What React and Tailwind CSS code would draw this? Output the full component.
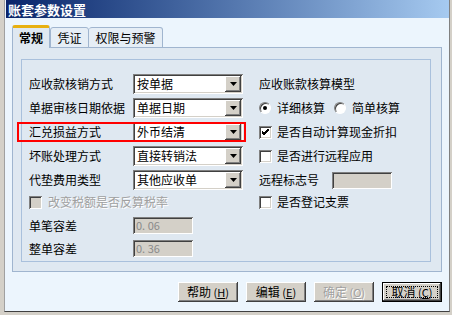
const font = { fontFamily: '"Noto Sans CJK SC", "DejaVu Sans", sans-serif' };

function Combo({ value }) {
  return (
    <div className="relative flex h-[20px] w-[110px] items-center bg-white pl-[4px] shadow-[inset_1px_1px_0_#808080,inset_-1px_-1px_0_#ffffff,inset_2px_2px_0_#404040,inset_-2px_-2px_0_#d4d0c8]">
      <span className="flex-1 text-[12px] leading-none text-black">{value}</span>
      <div className="mr-[2px] flex h-[16px] w-[16px] items-center justify-center bg-[#d4d0c8] shadow-[inset_-1px_-1px_0_#404040,inset_1px_1px_0_#ffffff,inset_-2px_-2px_0_#808080]">
        <svg width="7" height="4" viewBox="0 0 7 4">
          <polygon points="0,0 7,0 3.5,4" fill="#000" />
        </svg>
      </div>
    </div>
  );
}

function Field({ value, w = "w-[60px]" }) {
  return (
    <div className={`flex h-[17px] ${w} items-center bg-[#d4d0c8] pl-[3px] shadow-[inset_1px_1px_0_#808080,inset_-1px_-1px_0_#ffffff,inset_2px_2px_0_#404040,inset_-2px_-2px_0_#d4d0c8]`}>
      <span className="text-[11px] leading-none text-[#8a8a8a]">{value}</span>
    </div>
  );
}

function Check({ checked, disabled }) {
  return (
    <div className={`flex h-[13px] w-[13px] items-center justify-center ${disabled ? "bg-[#d4d0c8]" : "bg-white"} shadow-[inset_1px_1px_0_#808080,inset_-1px_-1px_0_#ffffff,inset_2px_2px_0_#404040,inset_-2px_-2px_0_#d4d0c8]`}>
      {checked && (
        <svg width="7" height="7" viewBox="0 0 7 7">
          <path d="M0 3 L2 5 L7 0 M0 4 L2 6 L7 1 M0 2 L2 4 L7 -1" stroke="#000" strokeWidth="1" fill="none" />
        </svg>
      )}
    </div>
  );
}

function Radio({ checked }) {
  return (
    <div className="flex h-[12px] w-[12px] items-center justify-center rounded-full border border-t-[#808080] border-l-[#808080] border-b-white border-r-white bg-white shadow-[inset_1px_1px_0_#404040]">
      {checked && <div className="h-[4px] w-[4px] rounded-full bg-black" />}
    </div>
  );
}

function Btn({ label, k, disabled, isDefault }) {
  const text = (
    <span className={`text-[12px] leading-none ${disabled ? "text-[#a0a0a0] [text-shadow:1px_1px_0_#ffffff]" : "text-black"}`}>
      {label}
      <span className="text-[11px]"> (<span className="underline">{k}</span>)</span>
    </span>
  );
  if (isDefault) {
    return (
      <div className="h-[20px] w-[60px] border border-black">
        <div className="flex h-full w-full items-center justify-center bg-[#d4d0c8] p-[3px] shadow-[inset_-1px_-1px_0_#404040,inset_1px_1px_0_#ffffff,inset_-2px_-2px_0_#808080]">
          <div className="flex h-full w-full items-center justify-center border border-dotted border-black">{text}</div>
        </div>
      </div>
    );
  }
  return (
    <div className="flex h-[20px] w-[60px] items-center justify-center bg-[#d4d0c8] shadow-[inset_-1px_-1px_0_#404040,inset_1px_1px_0_#ffffff,inset_-2px_-2px_0_#808080]">
      {text}
    </div>
  );
}

export default function App() {
  const rows = [
    ["应收款核销方式", "按单据"],
    ["单据审核日期依据", "单据日期"],
    ["汇兑损益方式", "外币结清"],
    ["坏账处理方式", "直接转销法"],
    ["代垫费用类型", "其他应收单"],
  ];

  const right = [
    <span className="text-[12px] leading-none">应收账款核算模型</span>,
    <div className="flex items-center">
      <Radio checked />
      <span className="ml-[6px] text-[12px] leading-none">详细核算</span>
      <div className="ml-[9px]"><Radio /></div>
      <span className="ml-[6px] text-[12px] leading-none">简单核算</span>
    </div>,
    <div className="flex items-center">
      <Check checked />
      <span className="ml-[5px] text-[12px] leading-none">是否自动计算现金折扣</span>
    </div>,
    <div className="flex items-center">
      <Check />
      <span className="ml-[5px] text-[12px] leading-none">是否进行远程应用</span>
    </div>,
    <div className="flex items-center">
      <span className="w-[73px] text-[12px] leading-none">远程标志号</span>
      <Field value="" />
    </div>,
  ];

  return (
    <div className="h-[315px] w-[452px] overflow-hidden bg-[#d4d0c8] pl-[4px] pr-[2px]" style={font}>
      <div className="flex h-[312px] flex-col border-l border-r border-b border-l-[#a0a0a0] border-r-[#808080] border-b-[#404040] bg-[#ecf5fd]">
        {/* title bar */}
        <div className="ml-[1px] flex h-[18px] items-center bg-gradient-to-r from-[#0a246a] to-[#a6caf0] pl-[2px]">
          <span className="text-[13px] font-bold leading-none text-white">账套参数设置</span>
        </div>

        <div className="pl-[7px] pt-[7px]">
          {/* tabs */}
          <div className="relative z-10 -mb-px flex items-end">
            <div className="flex h-[23px] w-[38px] items-center justify-center rounded-t-[3px] border-x border-t-[3px] border-x-[#a0b5cf] border-t-[#e8b010] bg-[#dfe8f1]">
              <span className="text-[12px] font-bold leading-none">常规</span>
            </div>
            <div className="flex h-[21px] w-[39px] items-center justify-center rounded-t-[3px] border border-[#a0b5cf] bg-[#e6eef6]">
              <span className="text-[12px] leading-none">凭证</span>
            </div>
            <div className="flex h-[21px] w-[74px] items-center justify-center rounded-t-[3px] border border-l-0 border-[#a0b5cf] bg-[#e6eef6]">
              <span className="text-[12px] leading-none">权限与预警</span>
            </div>
          </div>

          {/* panel */}
          <div className="h-[225px] w-[430px] border border-[#a0b5cf] bg-[#dfe8f1] pl-[8px] pt-[11px]">
            <div className="h-[203px] w-[410px] border border-[#a9c0dc] pl-[7px] pt-[14px]">
              {rows.map(([label, value], i) => (
                <div key={label} className={`flex h-[20px] items-center ${i > 0 ? "mt-[4px]" : ""}`}>
                  <div className="relative flex w-[230px] items-center">
                    <span className="w-[104px] text-[12px] leading-none text-black">{label}</span>
                    <Combo value={value} />
                    {i === 2 && (
                      <div className="absolute left-[-12px] top-0 h-[20px] w-[229px] border-2 border-[#ff0000]" />
                    )}
                  </div>
                  <div className="flex items-center">{right[i]}</div>
                </div>
              ))}

              <div className="mt-[4px] flex h-[16px] items-center">
                <div className="flex w-[230px] items-center">
                  <Check disabled />
                  <span className="ml-[6px] text-[12px] leading-none text-[#a0a0a0] [text-shadow:1px_1px_0_#ffffff]">改变税额是否反算税率</span>
                </div>
                <div className="flex items-center">
                  <Check />
                  <span className="ml-[5px] text-[12px] leading-none">是否登记支票</span>
                </div>
              </div>

              <div className="mt-[7px] flex h-[17px] items-center">
                <span className="w-[104px] text-[12px] leading-none">单笔容差</span>
                <Field value="0. 06" />
              </div>
              <div className="mt-[6px] flex h-[17px] items-center">
                <span className="w-[104px] text-[12px] leading-none">整单容差</span>
                <Field value="0. 36" />
              </div>
            </div>
          </div>

          {/* buttons */}
          <div className="mt-[10px] flex w-[430px] justify-end gap-[8px]">
            <Btn label="帮助" k="H" />
            <Btn label="编辑" k="E" />
            <Btn label="确定" k="O" disabled />
            <Btn label="取消" k="C" isDefault />
          </div>
        </div>
      </div>
    </div>
  );
}
